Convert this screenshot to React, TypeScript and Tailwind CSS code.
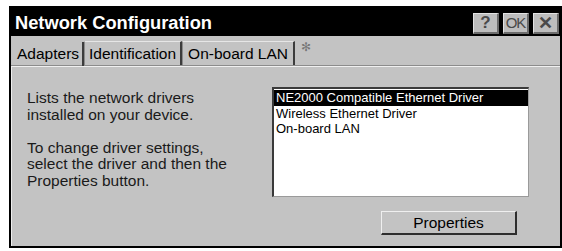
import React from 'react';

const drivers = [
  'NE2000 Compatible Ethernet Driver',
  'Wireless Ethernet Driver',
  'On-board LAN',
];

const TitleButton = ({ children }: { children: React.ReactNode }) => (
  <div className="w-[26px] h-[21px] bg-[#bdbdbd] border-t border-l border-[#e2e2e2] border-r-2 border-b-2 border-r-[#6b6b6b] border-b-[#6b6b6b] flex items-center justify-center text-[#4a4a4a] leading-none">
    {children}
  </div>
);

export default function App() {
  return (
    <div className="w-[562px] h-[251px] bg-white overflow-hidden pt-[6px] pl-[9px] font-['Liberation_Sans',Arial,sans-serif]">
      <div className="w-[553px] h-[242px] bg-[#c3c3c3] border-2 border-black flex flex-col">
        {/* Title bar */}
        <div className="h-[28px] bg-black flex items-center justify-between pl-[4px] pr-[1px] pt-[2px]">
          <span className="text-white font-bold text-[18.3px] leading-none">Network Configuration</span>
          <div className="flex gap-[4px] items-center">
            <TitleButton>
              <span className="font-bold text-[17px]">?</span>
            </TitleButton>
            <TitleButton>
              <span className="text-[15px] tracking-[-1px]">OK</span>
            </TitleButton>
            <TitleButton>
              <span className="font-bold text-[18px]">✕</span>
            </TitleButton>
          </div>
        </div>

        {/* Tabs */}
        <div className="h-[31px] flex items-end pl-[6px] border-b border-b-[#f0f0f0] shadow-[inset_0_-1px_0_#8c8c8c]">
          <div className="h-[24px] flex items-center pr-[3px] text-[15.5px] text-black border-r-2 border-r-[#3c3c3c]">
            Adapters
          </div>
          <div className="h-[24px] flex items-center px-[4px] text-[15.5px] text-black border-t border-t-[#e6e6e6] border-l border-l-[#8a8a8a] border-r-2 border-r-[#3c3c3c] mb-px">
            Identification
          </div>
          <div className="h-[24px] flex items-center px-[5px] text-[15.5px] text-black border-t border-t-[#e6e6e6] border-l border-l-[#8a8a8a] border-r-2 border-r-[#3c3c3c] mb-px">
            On-board LAN
          </div>
          <div className="self-start mt-[5px] ml-[6px] text-[12px] text-[#777] leading-none">✻</div>
        </div>

        {/* Content */}
        <div className="flex-1 flex pl-[15px] pt-[23px] border-l border-l-[#eeeeee]">
          <div className="w-[245px] text-[15.5px] leading-[16.5px] text-[#1a1a1a]">
            <p>
              Lists the network drivers
              <br />
              installed on your device.
            </p>
            <p className="mt-[16.5px]">
              To change driver settings,
              <br />
              select the driver and then the
              <br />
              Properties button.
            </p>
          </div>
          <div className="flex flex-col -mt-[3px]">
            <div className="w-[257px] h-[110px] bg-white border-t-2 border-l-2 border-[#3a3a3a] border-r border-b border-r-[#9a9a9a] border-b-[#9a9a9a] pt-px">
              {drivers.map((d, i) => (
                <div
                  key={d}
                  className={
                    i === 0
                      ? 'h-[16px] bg-black text-white text-[13px] leading-[16px] pl-[2px]'
                      : 'h-[15px] text-black text-[13px] leading-[15px] pl-[2px]'
                  }
                >
                  {d}
                </div>
              ))}
            </div>
            <div className="flex justify-end pr-[12px] mt-[14px]">
              <div className="w-[136px] h-[24px] bg-[#c3c3c3] border-t border-l border-[#efefef] border-r-2 border-b-2 border-r-[#2e2e2e] border-b-[#2e2e2e] flex items-center justify-center text-[15.5px] text-black">
                Properties
              </div>
            </div>
          </div>
        </div>
      </div>
    </div>
  );
}
